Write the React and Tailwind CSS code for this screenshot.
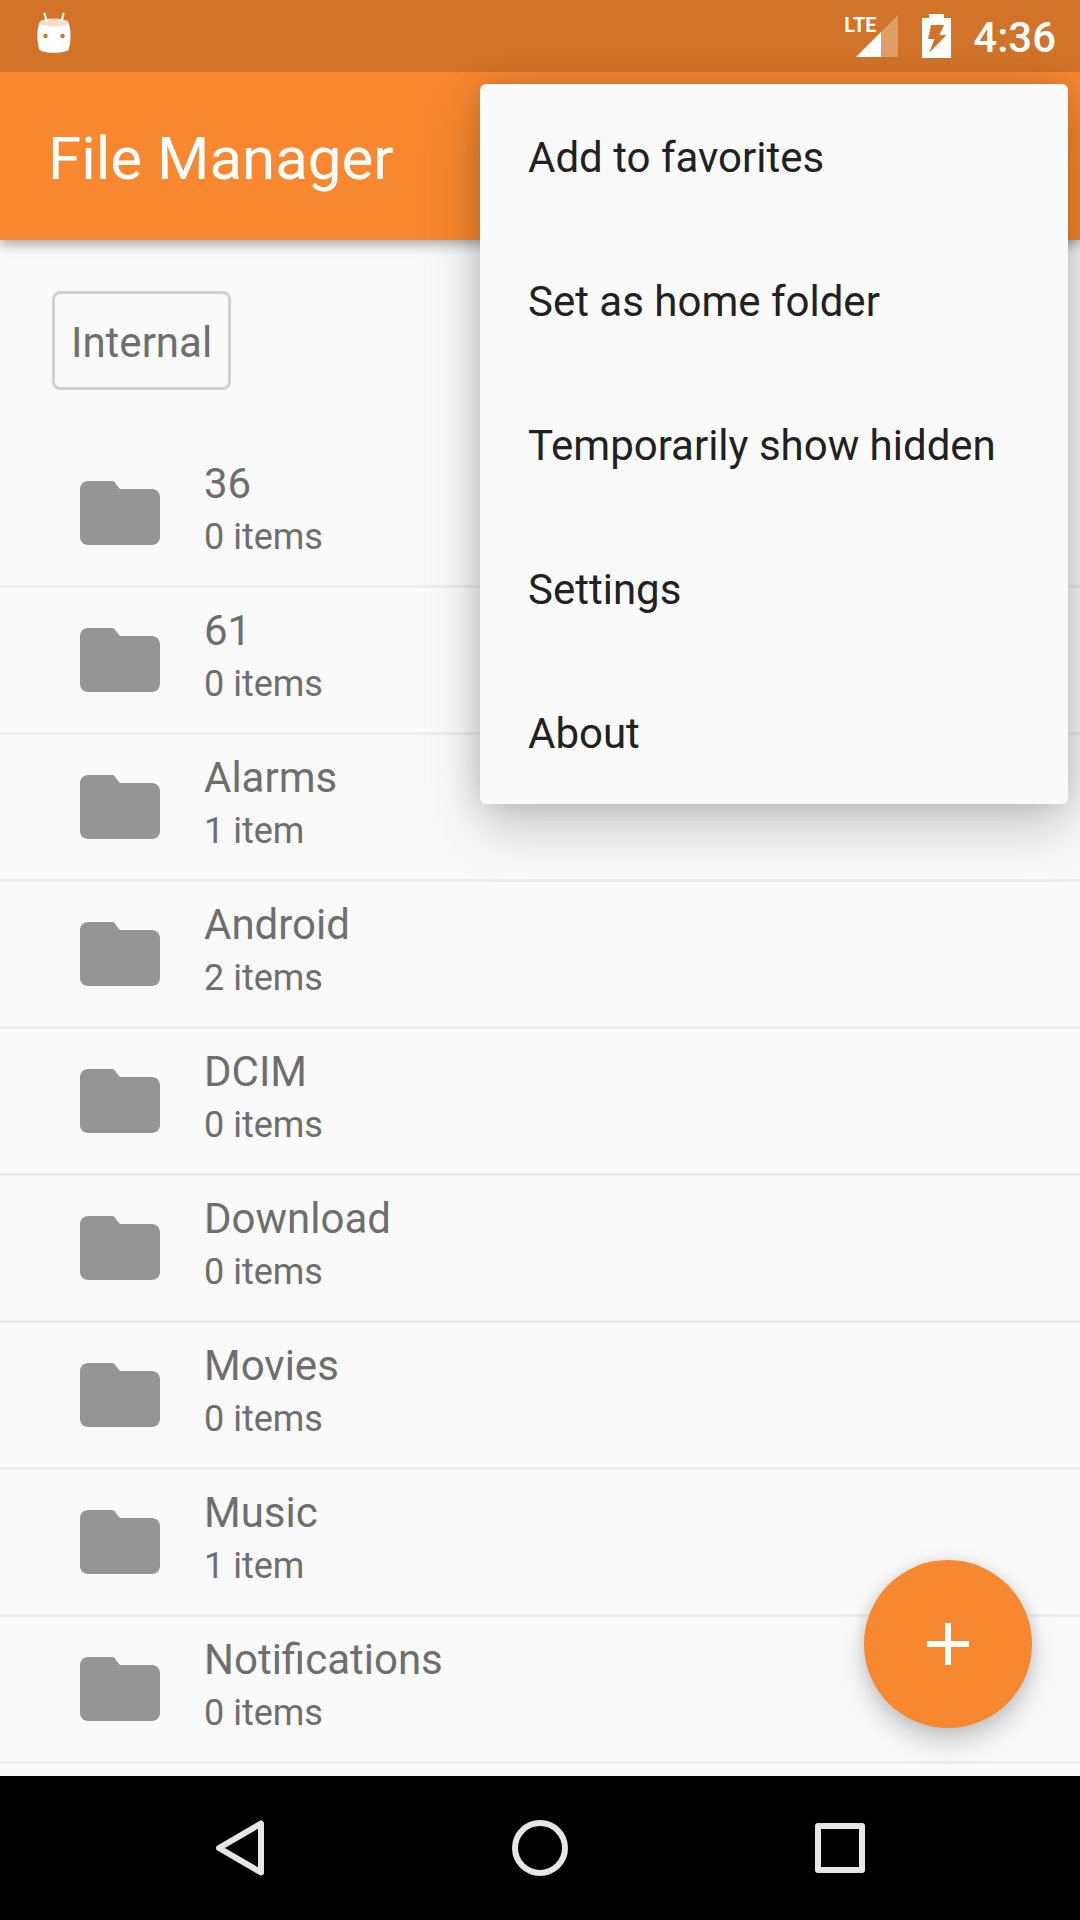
const FOLDERS = [
  { name: "36", detail: "0 items" },
  { name: "61", detail: "0 items" },
  { name: "Alarms", detail: "1 item" },
  { name: "Android", detail: "2 items" },
  { name: "DCIM", detail: "0 items" },
  { name: "Download", detail: "0 items" },
  { name: "Movies", detail: "0 items" },
  { name: "Music", detail: "1 item" },
  { name: "Notifications", detail: "0 items" },
];

const MENU_ITEMS = [
  "Add to favorites",
  "Set as home folder",
  "Temporarily show hidden",
  "Settings",
  "About",
];

function MarshmallowIcon() {
  return (
    <svg className="h-[42px] w-9" viewBox="0 0 36 42" aria-hidden="true">
      <path
        d="M3.5 10.5 C8 14.5 28 14.5 32.5 10.5 C35 17 35.5 28 32.8 37 C31.5 42 4.5 42 3.2 37 C0.5 28 1 17 3.5 10.5Z"
        fill="#fff"
      />
      <ellipse cx="18" cy="10.5" rx="14.5" ry="3.9" fill="#f6dccb" />
      <path d="M8.5 1.7 L10.5 9 M27.5 1.7 L25.5 9" stroke="#fff" strokeWidth="2.2" strokeLinecap="round" />
      <circle cx="9.5" cy="24" r="2.2" fill="#d17328" />
      <circle cx="26.5" cy="24" r="2.2" fill="#d17328" />
    </svg>
  );
}

function SignalIcon() {
  return (
    <svg className="h-[42px] w-[42px]" viewBox="0 0 42 42" aria-hidden="true">
      <path d="M42 0V42H25V17Z" fill="#fff" fillOpacity="0.3" />
      <path d="M25 17V42H0Z" fill="#fff" />
    </svg>
  );
}

function BatteryIcon() {
  return (
    <svg className="h-11 w-[29px]" viewBox="0 0 29 44" aria-hidden="true">
      <path
        fill="#fff"
        fillRule="evenodd"
        d="M7 0H22V4H29V44H0V4H7Z M9 11H22L17.5 21H24.5L7 39L12.500 25H6Z"
      />
    </svg>
  );
}

function FolderIcon() {
  return (
    <svg className="size-24 shrink-0" viewBox="0 0 24 24" aria-hidden="true">
      <path
        fill="#959595"
        d="M10 4H4c-1.100 0-2 .9-2 2v12c0 1.100.9 2 2 2h16c1.100 0 2-.9 2-2V8c0-1.100-.9-2-2-2h-8l-1-1.200C10.700 4.300 10.500 4 10 4z"
      />
    </svg>
  );
}

function StatusBar() {
  return (
    <div className="relative z-10 flex h-18 shrink-0 items-center justify-between bg-[#d17328] pr-6 pl-9 text-white">
      <div className="pb-1.5">
        <MarshmallowIcon />
      </div>
      <div className="flex items-center">
        <div className="relative pl-3">
          <SignalIcon />
          <span className="absolute top-0 left-0 text-[20px] leading-5 font-bold">LTE</span>
        </div>
        <div className="pl-6">
          <BatteryIcon />
        </div>
        <time className="pt-1 pl-[22px] text-[42px] leading-[48px] font-medium">4:36</time>
      </div>
    </div>
  );
}

function OverflowMenu() {
  return (
    <div
      role="menu"
      className="absolute top-[84px] right-3 z-20 flex w-[588px] flex-col rounded-md bg-[#fafafa] shadow-[0_24px_60px_rgba(0,0,0,0.2),0_0_30px_rgba(0,0,0,0.14)]"
    >
      {MENU_ITEMS.map((label) => (
        <button
          key={label}
          type="button"
          role="menuitem"
          className="h-36 px-12 pt-1 text-left text-[42px] leading-[54px] text-[#212121]"
        >
          {label}
        </button>
      ))}
    </div>
  );
}

function FolderRow({ name, detail }) {
  return (
    <li className="border-b-3 border-[#ededed]">
      <button type="button" className="flex h-36 w-full items-center gap-9 px-18 text-left">
        <FolderIcon />
        <span className="flex flex-col pb-1.5">
          <span className="text-[42px] leading-[54px]">{name}</span>
          <span className="text-[36px] leading-[52px]">{detail}</span>
        </span>
      </button>
    </li>
  );
}

function NavigationBar() {
  return (
    <nav className="grid h-36 shrink-0 grid-cols-3 bg-black px-[90px]">
      <button type="button" aria-label="Back" className="flex items-center justify-center">
        <svg className="size-14" viewBox="0 0 56 56" fill="none" stroke="#e6e6e6" strokeWidth="6" strokeLinejoin="round">
          <path d="M49 3.500V52.500L7 28Z" />
        </svg>
      </button>
      <button type="button" aria-label="Home" className="flex items-center justify-center">
        <svg className="size-14" viewBox="0 0 56 56" fill="none" stroke="#e6e6e6" strokeWidth="6">
          <circle cx="28" cy="28" r="25" />
        </svg>
      </button>
      <button type="button" aria-label="Recent apps" className="flex items-center justify-center">
        <svg className="size-14" viewBox="0 0 56 56" fill="none" stroke="#e6e6e6" strokeWidth="6" strokeLinejoin="round">
          <rect x="6" y="6" width="44" height="44" />
        </svg>
      </button>
    </nav>
  );
}

export default function App() {
  return (
    <div className="relative flex h-screen flex-col bg-[#fafafa] font-['Roboto',sans-serif]">
      <StatusBar />
      <header className="z-[5] flex h-42 shrink-0 items-center bg-[#f78830] px-12 pt-1.5 shadow-[0_4px_12px_rgba(0,0,0,0.36)]">
        <h1 className="text-[60px] leading-[72px] text-white">File Manager</h1>
      </header>
      <main className="relative min-h-0 flex-1 text-[#6e6e6e]">
        <div className="h-full overflow-hidden">
          <div className="flex px-13 py-[51px]">
            <button
              type="button"
              className="h-[99px] rounded-lg border-3 border-[#d2d2d2] px-4 pt-1 text-[42px] leading-[54px]"
            >
              Internal
            </button>
          </div>
          <ul>
            {FOLDERS.map((folder) => (
              <FolderRow key={folder.name} name={folder.name} detail={folder.detail} />
            ))}
          </ul>
        </div>
        <button
          type="button"
          aria-label="Add"
          className="absolute right-12 bottom-12 flex size-42 items-center justify-center rounded-full bg-[#f78830] shadow-[0_14px_28px_rgba(0,0,0,0.2),0_0_14px_rgba(0,0,0,0.1)]"
        >
          <svg className="size-[42px]" viewBox="0 0 42 42" aria-hidden="true">
            <path d="M21 0V42M0 21H42" stroke="#fff" strokeWidth="6" />
          </svg>
        </button>
      </main>
      <NavigationBar />
      <OverflowMenu />
    </div>
  );
}
